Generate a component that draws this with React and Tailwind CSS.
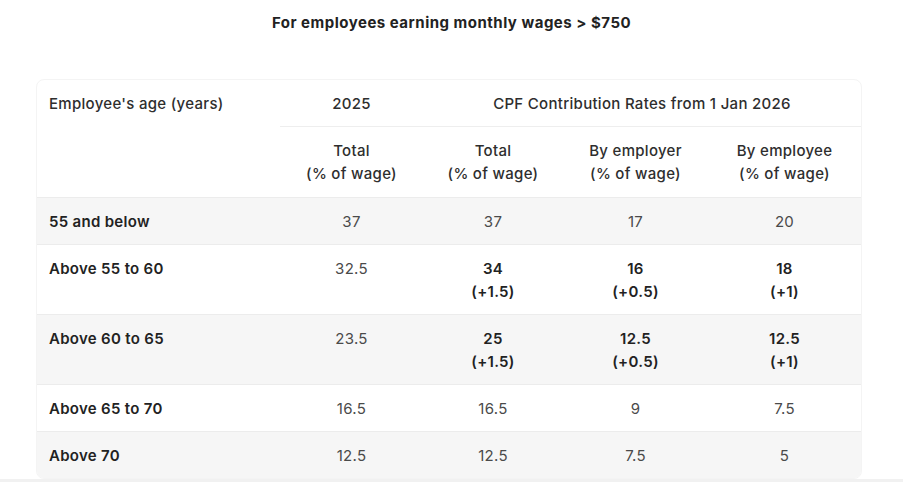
import React from "react";

const rows = [
  { age: "55 and below", y25: "37", total: ["37"], employer: ["17"], employee: ["20"], shade: true },
  { age: "Above 55 to 60", y25: "32.5", total: ["34", "(+1.5)"], employer: ["16", "(+0.5)"], employee: ["18", "(+1)"], bold: true },
  { age: "Above 60 to 65", y25: "23.5", total: ["25", "(+1.5)"], employer: ["12.5", "(+0.5)"], employee: ["12.5", "(+1)"], bold: true, shade: true },
  { age: "Above 65 to 70", y25: "16.5", total: ["16.5"], employer: ["9"], employee: ["7.5"] },
  { age: "Above 70", y25: "12.5", total: ["12.5"], employer: ["7.5"], employee: ["5"], shade: true },
];

const Cell = ({ lines, bold }) => (
  <td className={`px-2 pt-3 pb-[11px] text-center align-top ${bold ? "font-semibold text-[#222]" : "text-[#4a4a4a]"}`}>
    {lines.map((l, i) => (
      <div key={i}>{l}</div>
    ))}
  </td>
);

export default function App() {
  return (
    <div className="w-[903px] h-[482px] bg-white overflow-hidden flex flex-col" style={{ fontFamily: "Inter, 'Noto Sans', sans-serif" }}>
      <h2 className="h-[45px] pt-[11px] text-center text-[15px] leading-[23px] font-bold tracking-[0.5px] text-[#222]">
        For employees earning monthly wages &gt; $750
      </h2>

      <div className="h-[34px]" />

      <div className="ml-[36px] w-[826px] rounded-lg border border-[#f4f4f4] overflow-hidden">
        <table className="w-full table-fixed border-collapse text-[15px] leading-[23px] tracking-[0.3px]">
          <colgroup>
            <col className="w-[243px]" />
            <col className="w-[143px]" />
            <col className="w-[140px]" />
            <col className="w-[145px]" />
            <col />
          </colgroup>
          <thead className="text-[#2e2e2e] font-medium">
            <tr>
              <th rowSpan={2} className="px-3 pt-3 pb-[11px] text-left align-top font-medium">
                Employee's age (years)
              </th>
              <th className="px-2 pt-3 pb-[11px] font-medium border-b border-[#eeeeee]">2025</th>
              <th colSpan={3} className="px-2 pt-3 pb-[11px] font-medium border-b border-[#eeeeee]">
                CPF Contribution Rates from 1 Jan 2026
              </th>
            </tr>
            <tr>
              <th className="px-2 pt-3 pb-3 font-medium">Total<div>(% of wage)</div></th>
              <th className="px-2 pt-3 pb-3 font-medium">Total<div>(% of wage)</div></th>
              <th className="px-2 pt-3 pb-3 font-medium">By employer<div>(% of wage)</div></th>
              <th className="px-2 pt-3 pb-3 font-medium">By employee<div>(% of wage)</div></th>
            </tr>
          </thead>
          <tbody>
            {rows.map((r) => (
              <tr key={r.age} className={`border-t border-[#ececec] ${r.shade ? "bg-[#f6f6f6]" : "bg-white"}`}>
                <td className="px-3 pt-3 pb-[11px] align-top font-semibold text-[#222]">{r.age}</td>
                <td className="px-2 pt-3 pb-[11px] text-center align-top text-[#4a4a4a]">{r.y25}</td>
                <Cell lines={r.total} bold={r.bold} />
                <Cell lines={r.employer} bold={r.bold} />
                <Cell lines={r.employee} bold={r.bold} />
              </tr>
            ))}
          </tbody>
        </table>
      </div>

      <div className="flex-1 bg-[#f1f1f1]" />
    </div>
  );
}
